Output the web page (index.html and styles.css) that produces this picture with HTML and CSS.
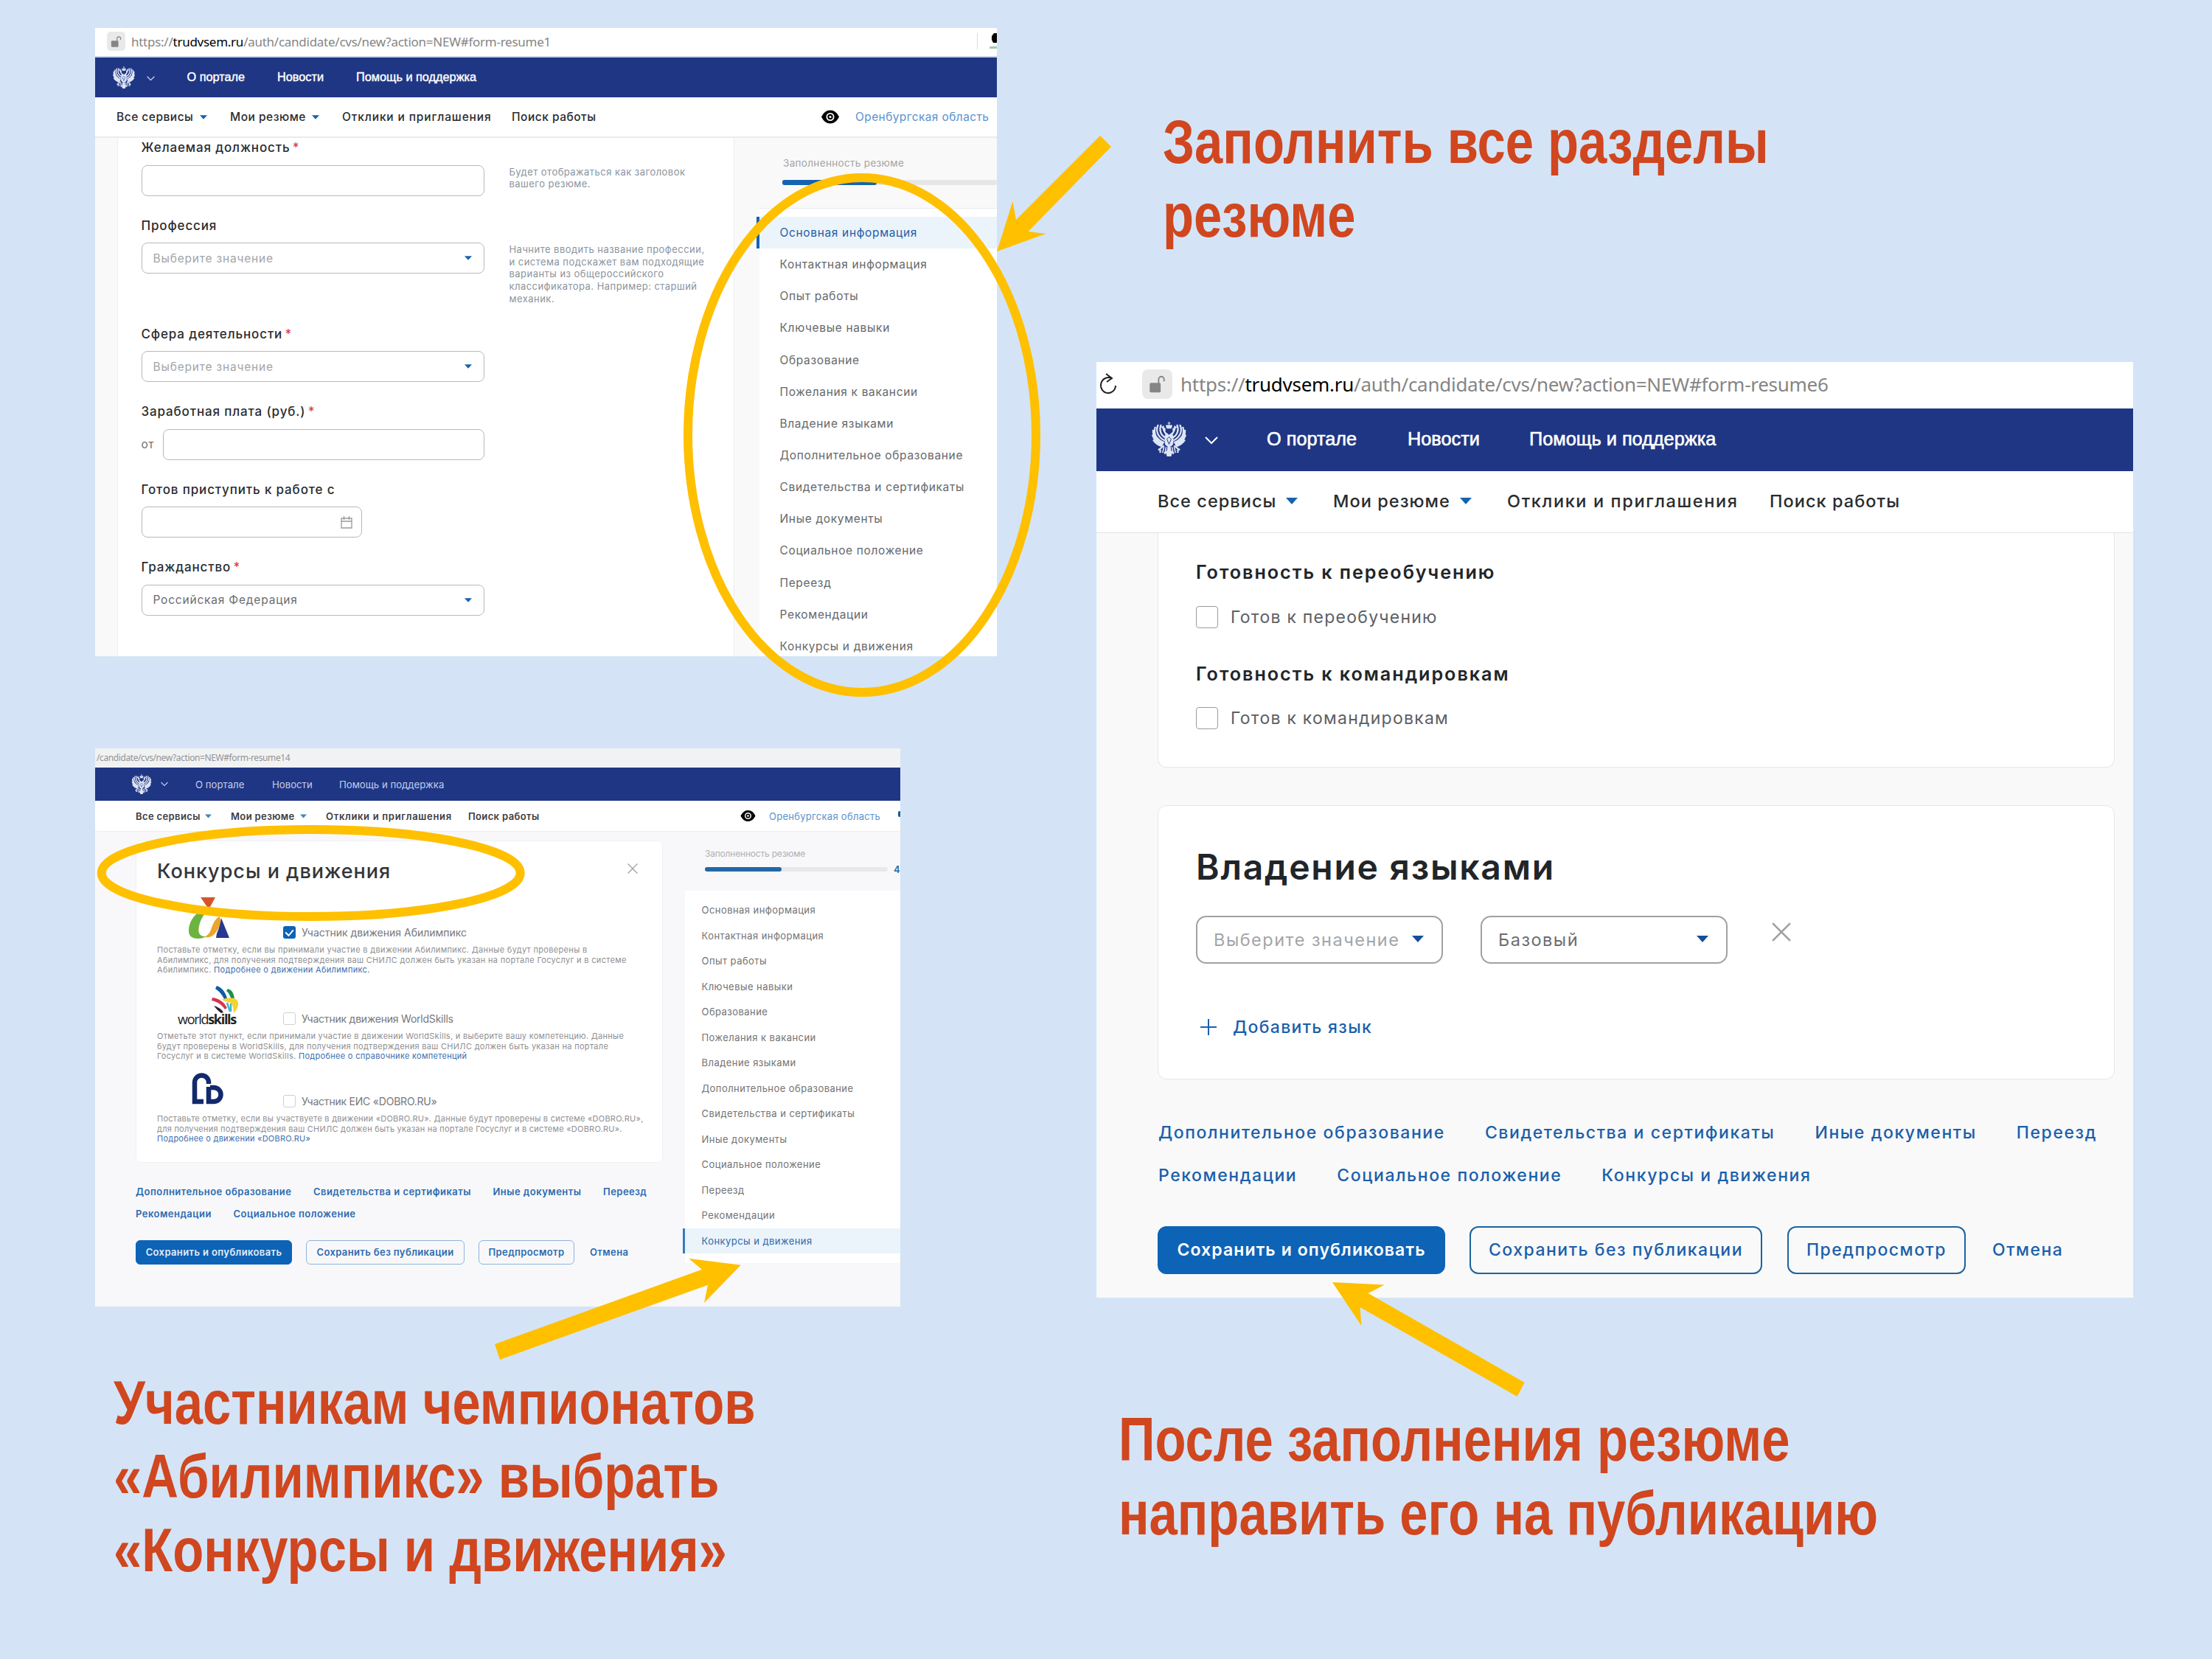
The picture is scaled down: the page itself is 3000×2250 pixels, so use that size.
FILE: index.html
```html
<!DOCTYPE html>
<html lang="ru">
<head>
<meta charset="utf-8">
<title>Заполнение резюме</title>
<link rel="stylesheet" href="styles.css">
</head>
<body>
<svg class="defs" width="0" height="0" aria-hidden="true">
  <symbol id="caret" viewBox="0 0 16 9"><path d="M0 0h16L8 9z"/></symbol>
  <symbol id="chev" viewBox="0 0 18 11"><path d="M1 1l8 8 8-8" fill="none" stroke="currentColor" stroke-width="2"/></symbol>
  <symbol id="cross" viewBox="0 0 24 24"><path d="M1 1l22 22M23 1L1 23" fill="none" stroke="currentColor" stroke-width="2.4"/></symbol>
  <symbol id="lock" viewBox="0 0 24 28"><rect x="1" y="12" width="16" height="14" rx="2"/><path d="M14 13V7a4 4 0 0 1 8 0v3" fill="none" stroke="currentColor" stroke-width="2"/></symbol>
  <symbol id="eye" viewBox="0 0 24 18"><path d="M0 9C3 3 7 0 12 0s9 3 12 9c-3 6-7 9-12 9S3 15 0 9z"/><circle cx="12" cy="9" r="4.600" fill="none" stroke="#fff" stroke-width="1.800"/><circle cx="12" cy="9" r="1.600" fill="#fff"/></symbol>
  <symbol id="eagle" viewBox="0 0 50 48">
    <path d="M25 0v5M23 2h4M21 5h8l-1 4h-6z" stroke="currentColor" stroke-width="1"/>
    <path d="M15 7l5 2 0 5 5 4 0 0 5-4 0-5 5-2-2 6-3 5-1 9h-8l-1-9-3-5z"/>
    <path d="M13 8l5-3v4zM37 8l-5-3v4z"/>
    <g fill="none" stroke="currentColor" stroke-width="2.300">
      <path d="M14 4c-3 7-1 14 6 18M10 4c-4 8-1 17 9 22M6 7c-3 9 1 17 12 22M3 11c-1 9 4 15 14 20M2 18c2 7 6 11 14 15M3 25c3 5 6 7 12 9"/>
      <path d="M36 4c3 7 1 14-6 18M40 4c4 8 1 17-9 22M44 7c3 9-1 17-12 22M47 11c1 9-4 15-14 20M48 18c-2 7-6 11-14 15M47 25c-3 5-6 7-12 9"/>
      <path d="M18 33l-6 5 1 5M32 33l6 5-1 5M10 38l4 2M40 38l-4 2"/>
    </g>
    <path d="M19 19h12v10q0 4-6 6-6-2-6-6z"/>
    <path d="M23 34h4l1 6 5 3-4 1-1 4h-6l-1-4-4-1 5-3z"/>
    <path d="M18 35l-2 8M21 35l-2 10M32 35l2 8M29 35l2 10" stroke="currentColor" stroke-width="1.600"/>
    <path d="M25 21l3 3-3 7-3-7z" fill="none" stroke="#1f3684" stroke-width="1"/>
  </symbol>
</svg>

<main class="slide">

  <section class="win w1">
    <div class="urlbar">
      <span class="lockbox"><svg><use href="#lock"/></svg></span>
      <span class="url">https://<b>trudvsem.ru</b>/auth/candidate/cvs/new?action=NEW#form-resume1</span>
      <span class="ext"><svg viewBox="0 0 10 22"><path d="M10 0H6L3 4v5l2 4h5z" fill="#000"/><path d="M0 18h10v3H0z" fill="#9cd0a6"/></svg></span>
    </div>
    <header class="top">
      <svg class="eagle"><use href="#eagle"/></svg><svg class="chev"><use href="#chev"/></svg>
      <a>О портале</a><a>Новости</a><a>Помощь и поддержка</a>
    </header>
    <nav class="menu">
      <a>Все сервисы</a><svg class="caret"><use href="#caret"/></svg>
      <a>Мои резюме</a><svg class="caret"><use href="#caret"/></svg>
      <a class="wide">Отклики и приглашения</a><a>Поиск работы</a>
      <svg class="eye"><use href="#eye"/></svg><a class="region">Оренбургская область</a>
    </nav>
    <div class="body">
      <form class="form">
        <label>Желаемая должность <em>*</em></label>
        <div class="row"><div class="field"></div><p>Будет отображаться как заголовок<br>вашего резюме.</p></div>
        <label>Профессия</label>
        <div class="row tall"><div class="field"><span>Выберите значение</span><svg class="caret"><use href="#caret"/></svg></div><p>Начните вводить название профессии,<br>и система подскажет вам подходящие<br>варианты из общероссийского<br>классификатора. Например: старший<br>механик.</p></div>
        <label>Сфера деятельности <em>*</em></label>
        <div class="row"><div class="field"><span>Выберите значение</span><svg class="caret"><use href="#caret"/></svg></div></div>
        <label>Заработная плата (руб.) <em>*</em></label>
        <div class="row"><span class="from">от</span><div class="field salary"></div></div>
        <label>Готов приступить к работе с</label>
        <div class="row"><div class="field date"><svg class="cal" viewBox="0 0 16 17"><path d="M1 3h14v13H1zM1 7h14M4.500 0v5M11.500 0v5" fill="none" stroke="#9a9a9a" stroke-width="1.300"/></svg></div></div>
        <label>Гражданство <em>*</em></label>
        <div class="row"><div class="field filled"><span>Российская Федерация</span><svg class="caret"><use href="#caret"/></svg></div></div>
      </form>
      <aside class="side">
        <div class="done">Заполненность резюме</div>
        <div class="bar"><i></i></div>
        <ul>
          <li class="on">Основная информация</li><li>Контактная информация</li><li>Опыт работы</li><li>Ключевые навыки</li><li>Образование</li><li>Пожелания к вакансии</li><li>Владение языками</li><li>Дополнительное образование</li><li>Свидетельства и сертификаты</li><li>Иные документы</li><li>Социальное положение</li><li>Переезд</li><li>Рекомендации</li><li>Конкурсы и движения</li>
        </ul>
      </aside>
    </div>
  </section>

  <section class="win w2">
    <div class="urlbar">
      <svg class="reload" viewBox="0 0 24 30"><path d="M17 7.500A10 10.500 0 1 0 22 17M9 1l8 6-7 5" fill="none" stroke="#222" stroke-width="2"/></svg>
      <span class="lockbox"><svg><use href="#lock"/></svg></span>
      <span class="url">https://<b>trudvsem.ru</b>/auth/candidate/cvs/new?action=NEW#form-resume6</span>
    </div>
    <header class="top">
      <svg class="eagle"><use href="#eagle"/></svg><svg class="chev"><use href="#chev"/></svg>
      <a>О портале</a><a>Новости</a><a>Помощь и поддержка</a>
    </header>
    <nav class="menu">
      <a>Все сервисы</a><svg class="caret"><use href="#caret"/></svg>
      <a>Мои резюме</a><svg class="caret"><use href="#caret"/></svg>
      <a class="wide">Отклики и приглашения</a><a>Поиск работы</a>
    </nav>
    <div class="body">
      <div class="card ready">
        <h3>Готовность к переобучению</h3>
        <div class="check"><i></i><span>Готов к переобучению</span></div>
        <h3>Готовность к командировкам</h3>
        <div class="check"><i></i><span>Готов к командировкам</span></div>
      </div>
      <div class="card langs">
        <h2>Владение языками</h2>
        <div class="pick">
          <div class="field"><span>Выберите значение</span><svg class="caret"><use href="#caret"/></svg></div>
          <div class="field filled"><span>Базовый</span><svg class="caret"><use href="#caret"/></svg></div>
          <svg class="cross"><use href="#cross"/></svg>
        </div>
        <div class="add"><svg viewBox="0 0 22 22"><path d="M11 0v22M0 11h22" stroke="#1a62ae" stroke-width="2"/></svg>Добавить язык</div>
      </div>
      <div class="links">
        <div><a>Дополнительное образование</a><a>Свидетельства и сертификаты</a><a>Иные документы</a><a>Переезд</a></div>
        <div><a>Рекомендации</a><a>Социальное положение</a><a>Конкурсы и движения</a></div>
      </div>
      <div class="buttons"><a class="btn main">Сохранить и опубликовать</a><a class="btn">Сохранить без публикации</a><a class="btn">Предпросмотр</a><a class="cancel">Отмена</a></div>
    </div>
  </section>

  <section class="win w3">
    <div class="urlbar"><span class="url">/candidate/cvs/new?action=NEW#form-resume14</span></div>
    <header class="top">
      <svg class="eagle"><use href="#eagle"/></svg><svg class="chev"><use href="#chev"/></svg>
      <a>О портале</a><a>Новости</a><a>Помощь и поддержка</a>
    </header>
    <nav class="menu">
      <a>Все сервисы</a><svg class="caret"><use href="#caret"/></svg>
      <a>Мои резюме</a><svg class="caret"><use href="#caret"/></svg>
      <a class="wide">Отклики и приглашения</a><a>Поиск работы</a>
      <svg class="eye"><use href="#eye"/></svg><a class="region">Оренбургская область</a><i class="pin"></i>
    </nav>
    <div class="body">
      <div class="col">
        <div class="card">
          <div class="title"><h2>Конкурсы и движения</h2><svg class="cross"><use href="#cross"/></svg></div>
          <div class="item abil">
            <svg class="logo" viewBox="0 0 56 56"><path d="M16 0h20l-7 13c3 2 6 4 6 8l-12-1c2-3 3-5 2-7z" fill="#d4552a"/><path d="M19 17C6 23 0 35 0 45c0 8 5 11 12 11 5 0 9-1 11-3-9 0-11-6-9-14 2-9 6-15 10-20z" fill="#6cb33f"/><path d="M42 26c-7 3-9 10-12 18-2 5-5 8-9 10 13 2 17-7 23-20z" fill="#eaa52b"/><path d="M44 28l11 27H37l1-6c3-7 5-13 6-21z" fill="#28378f"/></svg>
            <i class="box on"><svg viewBox="0 0 16 16"><path d="M3 8l4 4 6-7" fill="none" stroke="#fff" stroke-width="1.800"/></svg></i><span>Участник движения Абилимпикс</span>
          </div>
          <p class="p1">Поставьте отметку, если вы принимали участие в движении Абилимпикс. Данные будут проверены в<br>Абилимпикс, для получения подтверждения ваш СНИЛС должен быть указан на портале Госуслуг и в системе<br>Абилимпикс. <a>Подробнее о движении Абилимпикс.</a></p>
          <div class="item ws">
            <div class="logo"><svg viewBox="0 0 38 38"><path d="M7 1c7 2 12 9 14 17l-4 1C14 13 11 9 5 5z" fill="#0f5ba8"/><path d="M22 5c7 2 9 9 9 16l-4 1c-1-6-3-11-7-14z" fill="#15924b"/><path d="M1 17c9 1 16 6 20 14l-3 2C14 27 9 23 0 21z" fill="#d8324a"/><path d="M14 20c10-5 24-3 22 7-1 5-3 8-6 11-1-8-1-12-5-14-4-1-7-2-11-4z" fill="#f3d32f"/><path d="M3 28c6 2 10 4 13 9l-3 1c-3-2-6-5-10-10z" fill="#2a2230"/><path d="M21 24l4 12M26 25v11" stroke="#41b6d8" stroke-width="2.500"/></svg><small>world<b>skills</b></small></div>
            <i class="box"></i><span>Участник движения WorldSkills</span>
          </div>
          <p class="p2">Отметьте этот пункт, если принимали участие в движении WorldSkills, и выберите вашу компетенцию. Данные<br>будут проверены в WorldSkills, для получения подтверждения ваш СНИЛС должен быть указан на портале<br>Госуслуг и в системе WorldSkills. <a>Подробнее о справочнике компетенций</a></p>
          <div class="item dobro">
            <svg class="logo" viewBox="0 0 46 43"><path d="M23 15v-2A9.500 9.500 0 0 0 4 13v26h12M23 19v20h7a9 9 0 0 0 0-19h-5" fill="none" stroke="#12296b" stroke-width="6.500"/></svg>
            <i class="box"></i><span>Участник ЕИС «DOBRO.RU»</span>
          </div>
          <p class="p3">Поставьте отметку, если вы участвуете в движении «DOBRO.RU». Данные будут проверены в системе «DOBRO.RU»,<br>для получения подтверждения ваш СНИЛС должен быть указан на портале Госуслуг и в системе «DOBRO.RU».<br><a>Подробнее о движении «DOBRO.RU»</a></p>
        </div>
        <div class="links">
          <div><a>Дополнительное образование</a><a>Свидетельства и сертификаты</a><a>Иные документы</a><a>Переезд</a></div>
          <div><a>Рекомендации</a><a>Социальное положение</a></div>
        </div>
        <div class="buttons"><a class="btn main">Сохранить и опубликовать</a><a class="btn">Сохранить без публикации</a><a class="btn">Предпросмотр</a><a class="cancel">Отмена</a></div>
      </div>
      <aside class="side">
        <div class="done">Заполненность резюме</div>
        <div class="meter"><div class="bar"><i></i></div><b>4</b></div>
        <ul>
          <li>Основная информация</li><li>Контактная информация</li><li>Опыт работы</li><li>Ключевые навыки</li><li>Образование</li><li>Пожелания к вакансии</li><li>Владение языками</li><li>Дополнительное образование</li><li>Свидетельства и сертификаты</li><li>Иные документы</li><li>Социальное положение</li><li>Переезд</li><li>Рекомендации</li><li class="on">Конкурсы и движения</li>
        </ul>
      </aside>
    </div>
  </section>

  <h1 class="note n1"><span>Заполнить все разделы</span><br><span>резюме</span></h1>
  <h1 class="note n2"><span>После заполнения резюме</span><br><span>направить его на публикацию</span></h1>
  <h1 class="note n3"><span>Участникам чемпионатов</span><br><span>«Абилимпикс» выбрать</span><br><span>«Конкурсы и движения»</span></h1>

  <svg class="marks" viewBox="0 0 3000 2250">
    <g fill="none" stroke="#ffc000" stroke-width="12">
      <ellipse cx="1169" cy="590" rx="236" ry="349"/>
      <ellipse cx="421.700" cy="1184" rx="284" ry="59"/>
    </g>
    <g fill="#ffc000">
      <path d="M1492 184L1507 199 1394.500 314 1418.500 317 1352 341 1373.500 273 1378 298z"/>
      <path d="M1807 1739L1877.600 1742.400 1855.600 1754 2067.700 1875 2057.600 1894 1844.600 1773 1846.400 1798z"/>
      <path d="M1004.700 1715.700L955 1767 960 1742.700 678 1844 671 1823 952 1721.700 934 1706.700z"/>
    </g>
  </svg>
</main>
</body>
</html>
```
FILE: styles.css
```css
* { box-sizing: border-box; margin: 0; padding: 0; }
body { width: 3000px; height: 2250px; overflow: hidden; font-family: Inter, "Noto Sans", sans-serif; }
.defs { position: absolute; }
.slide { position: relative; width: 3000px; height: 2250px; background: #d4e4f6; overflow: hidden; white-space: nowrap; }
.marks { position: absolute; left: 0; top: 0; width: 3000px; height: 2250px; }
svg { display: block; }
i { font-style: normal; }

/* captions */
.note { position: absolute; font: bold 84px/100px "Liberation Sans", Arial, sans-serif; color: #d0461f; }
.note span { display: inline-block; transform: scaleX(.819); transform-origin: 0 50%; }
.n1 { left: 1577px; top: 142px; }
.n2 { left: 1517px; top: 1902px; }
.n3 { left: 154px; top: 1852px; }

/* shared window parts */
.win { position: absolute; overflow: hidden; background: #fff; display: flex; flex-direction: column; }
.urlbar, .top, .menu { display: flex; align-items: center; flex: none; }
.url { font-family: "Noto Sans", sans-serif; color: #858585; }
.url b { font-weight: 400; color: #000; }
.lockbox { background: #e9e9e9; color: #858585; fill: currentColor; display: flex; align-items: center; justify-content: center; flex: none; }
.top { display: grid; background: #1f3684; color: #fff; fill: #dfe5f5; }
.eagle { color: #dfe5f5; }
.menu { display: grid; color: #2a2c2f; font-weight: 500; }
.caret { fill: #1463ae; }
.body { flex: 1; background: #f9f9f9; }
.field { border: 1.5px solid #b9b9b9; background: #fff; display: flex; align-items: center; justify-content: space-between; color: #a3a5a9; flex: none; }
.field.filled { color: #6a6d72; }
.side ul { list-style: none; background: #fff; }
.side li { color: #66696c; }
.side li.on { background: #ebf4fb; color: #1f5fa8; }
.menu .region { color: #5a93cc; font-weight: 400; }
.links, .buttons a { color: #1a5fab; font-weight: 500; }
.links div { display: flex; }
.buttons { display: flex; }
.btn { display: flex; align-items: center; justify-content: center; border: 1.5px solid #1c639f; flex: none; }
.buttons .main { background: #0d63b6; color: #fff; border-color: #0d63b6; }

/* first window */
.w1 { left: 129px; top: 38px; width: 1223px; height: 852px; }
.w1 .urlbar { height: 40px; border-bottom: 2px solid #c7d3e3; }
.w1 .lockbox { width: 25px; height: 26px; border-radius: 5px; margin: -2px 0 0 16px; }
.w1 .lockbox svg { width: 15px; height: 17px; }
.w1 .url { font-size: 17px; letter-spacing: -.26px; margin: -2px 0 0 8px; }
.ext { margin: -2px 0 0 auto; width: 27px; border-left: 1px solid #ddd; padding-left: 16px; }
.ext svg { width: 10px; height: 22px; }
.w1 .top { height: 54px; grid-template-columns: 47px 54.5px 122.5px 107px 1fr; padding: 0 0 1px 23px; font: 16.3px "Liberation Sans"; -webkit-text-stroke: .4px #fff; }
.w1 .eagle { width: 32px; height: 30px; }
.w1 .chev { width: 11px; height: 7px; margin-top: 4px; color: #cdd6ee; }
.w1 .menu { height: 55px; border-bottom: 2px solid #ebebeb; grid-template-columns: 113px 41px 111px 41px 230px 420px 46px 1fr; padding-left: 29px; font-size: 15.5px; letter-spacing: .5px; }
.w1 .menu .wide { letter-spacing: .87px; }
.w1 .menu .region { letter-spacing: .4px; }
.w1 .caret { width: 10px; height: 6px; }
.w1 .eye { width: 24px; height: 19px; }
.w1 .body { display: grid; grid-template-columns: 867px 34px 1fr; }
.form { margin-left: 30px; background: #fff; border-left: 1px solid #f0f0f0; border-right: 1px solid #ececec; padding: 1px 0 0 31.5px; }
.form label { display: block; height: 24px; line-height: 24px; margin-bottom: 11.5px; font-size: 17px; letter-spacing: .85px; font-weight: 500; color: #2a2c2f; }
.form em { color: #e0404c; font-style: normal; margin-left: -2px; }
.row { display: flex; height: 42px; margin-bottom: 28px; }
.row.tall { margin-bottom: 69.5px; }
.row .field { width: 465px; height: 42px; border-radius: 8px; padding: 0 16px 0 15px; font-size: 15.5px; letter-spacing: .8px; }
.row .salary { width: 436px; }
.row .date { width: 299px; justify-content: flex-end; padding-right: 12px; }
.cal { width: 16px; height: 17px; }
.from { width: 29px; line-height: 42px; font-size: 15.5px; letter-spacing: .5px; color: #6f7276; }
.row p { margin: 1px 0 0 34px; font-size: 13px; letter-spacing: .46px; line-height: 16.7px; color: #8a949e; }
.w1 .side { grid-column: 3; }
.w1 .done { margin: 24px 0 13px 32px; font-size: 13.5px; letter-spacing: .33px; line-height: 20px; color: #a3a3a3; }
.w1 .bar { margin-left: 31px; height: 7px; background: #e6e6e6; border-radius: 3px; }
.bar i { display: block; height: 100%; background: #1463b2; border-radius: inherit; }
.w1 .bar i { width: 128px; }
.w1 ul { margin-top: 31px; border-top: 1px solid #ececec; padding-top: 11px; height: 620px; }
.w1 li { height: 43.15px; line-height: 43.15px; padding-left: 27.5px; font-size: 15.5px; letter-spacing: .65px; }
.w1 li.on { box-shadow: -4px 0 0 #1463b2; }

/* second window */
.w2 { left: 1487px; top: 491px; width: 1406px; height: 1269px; }
.w2 .urlbar { height: 63px; padding-bottom: 3px; }
.reload { width: 24px; height: 30px; margin-left: 4px; flex: none; }
.w2 .lockbox { width: 41px; height: 40px; border-radius: 8px; margin: 0 11px 0 34px; }
.w2 .lockbox svg { width: 23px; height: 26px; }
.w2 .url { font-size: 26px; letter-spacing: -.27px; }
.w2 .top { height: 85px; grid-template-columns: 73px 84px 191px 165px 1fr; padding: 0 0 2px 74px; font: 25.3px "Liberation Sans"; -webkit-text-stroke: .6px #fff; }
.w2 .eagle { width: 49px; height: 47px; }
.w2 .chev { width: 18px; height: 11px; margin-top: 4px; }
.w2 .menu { height: 84px; border-bottom: 1.5px solid #e3e3e3; grid-template-columns: 174px 64px 172px 64px 356px 1fr; padding: 0 0 2px 83px; font-size: 23.5px; letter-spacing: 1.05px; }
.w2 .menu .wide { letter-spacing: 1.62px; }
.w2 .caret { width: 16px; height: 9px; }
.w2 .body { padding-left: 83px; }
.w2 .card { width: 1298px; background: #fff; border: 1.5px solid #e6e7e8; border-radius: 12px; padding-left: 51px; }
.w2 .ready { height: 318px; border-top: 0; border-radius: 0 0 12px 12px; padding-top: 38px; }
.ready h3 { font-size: 25.2px; letter-spacing: 1.95px; font-weight: 600; line-height: 30px; color: #212529; margin-bottom: 31px; }
.ready h3 + .check + h3 { margin-top: 47px; margin-bottom: 30px; }
.check { display: flex; align-items: center; height: 30px; font-size: 23px; letter-spacing: 1.25px; color: #5c6065; }
.check i { width: 30px; height: 30px; border: 1.5px solid #9b9b9b; border-radius: 4px; margin-right: 17px; }
.langs { margin-top: 51px; height: 372px; padding-top: 53px; }
.langs h2 { font-size: 48px; letter-spacing: 1.75px; font-weight: 600; line-height: 60px; color: #212529; }
.pick { display: flex; align-items: flex-start; margin-top: 36px; }
.pick .field { width: 335px; height: 65px; border: 2px solid #a1a1a1; border-radius: 14px; padding: 0 24px 0 22px; margin-right: 51px; font-size: 23.5px; letter-spacing: 1.5px; }
.pick .field .caret { fill: #154f98; margin-bottom: 3px; }
.pick .cross { width: 26px; height: 26px; margin: 9px 0 0 9px; color: #a0a0a0; }
.add { display: flex; align-items: center; height: 30px; margin-top: 71px; padding-left: 6px; font-size: 23px; letter-spacing: 1.3px; font-weight: 500; color: #1a5fab; }
.add svg { width: 22px; height: 22px; margin-right: 22px; }
.w2 .links { margin-top: 56.5px; font-size: 23px; letter-spacing: 1.58px; line-height: 30px; padding-left: 1px; }
.w2 .links div { gap: 54px; margin-bottom: 28px; }
.w2 .buttons { margin-top: 54.5px; font-size: 23px; letter-spacing: 1.5px; line-height: 65px; }
.w2 .btn { height: 65px; border-radius: 12px; border-width: 2px; }
.w2 .btn:nth-child(1) { width: 390px; margin-right: 33px; font-weight: 600; letter-spacing: 1.1px; }
.w2 .btn:nth-child(2) { width: 397px; margin-right: 34px; }
.w2 .btn:nth-child(3) { width: 242px; margin-right: 36px; }

/* third window */
.w3 { left: 129px; top: 1015px; width: 1092px; height: 757px; }
.w3 .urlbar { height: 26px; padding-bottom: 2px; background: #f1f2f4; }
.w3 .url { font-size: 12px; letter-spacing: -.4px; margin-left: 2px; color: #939393; }
.w3 .top { height: 45px; grid-template-columns: 40px 47px 104px 91px 1fr; padding-left: 49px; font-size: 13.2px; color: #c3cdeb; }
.w3 .eagle { width: 28px; height: 27px; }
.w3 .chev { width: 10px; height: 7px; }
.w3 .menu { height: 42px; border-bottom: 1px solid #efeff1; grid-template-columns: 94px 35px 94px 35px 193px 369px 39px 175px 1fr; padding-left: 55px; font-size: 13px; letter-spacing: .37px; font-weight: 600; color: #3c3c3f; }
.w3 .menu .wide { letter-spacing: .68px; }
.w3 .menu .region { letter-spacing: .28px; }
.w3 .caret { width: 9px; height: 6px; fill: #4287b8; }
.w3 .eye { width: 21px; height: 15px; }
.pin { width: 4px; height: 8px; background: #1b5b96; border-radius: 2px 0 0 2px; margin-top: -6px; }
.w3 .body { display: grid; grid-template-columns: 55px 715px 30px 1fr; background: #f8f8fa; }
.w3 .col { grid-column: 2; padding-top: 12px; }
.w3 .card { height: 437px; background: #fff; border: 1px solid #f2f2f4; border-radius: 7px; padding: 22px 0 0 28px; }
.title { display: flex; justify-content: space-between; align-items: center; height: 36px; }
.title h2 { font-size: 27px; letter-spacing: 1px; font-weight: 500; color: #333538; }
.title .cross { width: 14px; height: 14px; margin: -6px 33px 0 0; color: #a6a6a6; }
.item { display: grid; grid-template-columns: 171px 25px 1fr; align-items: end; font-size: 14px; line-height: 17px; color: #77787a; }
.box { width: 17px; height: 17px; border: 1px solid #cfcfcf; border-radius: 3px; }
.box.on { background: #0d62b5; border: 0; }
.abil { height: 57px; margin-top: 17px; }
.abil .logo { width: 56px; height: 56px; margin-left: 43px; }
.ws { height: 54px; margin-top: 14px; }
.ws, .dobro { letter-spacing: -.22px; }
.ws .logo { margin-left: 28px; }
.ws .logo svg { width: 38px; height: 38px; margin-left: 46px; }
.ws small { display: block; font: 18px/16px "Open Sans", sans-serif; letter-spacing: -1.3px; color: #222; }
.dobro { height: 47px; margin-top: 16px; }
.dobro .logo { width: 46px; height: 43px; margin: 0 0 4px 47px; }
.w3 p { padding-top: 1px; margin-top: 8px; font-size: 11px; letter-spacing: .3px; line-height: 13.6px; color: #8f9093; height: 41px; }
.w3 .p1 { letter-spacing: .33px; }
.w3 .p3 { letter-spacing: .24px; }
.w3 p a { color: #3d6fae; }
.w3 .links { margin-top: 29px; font-size: 13px; letter-spacing: .48px; line-height: 20px; }
.w3 .links div { gap: 29.5px; margin-bottom: 9.5px; }
.w3 .links, .w3 .buttons a { font-weight: 600; color: #2b6bb0; }
.w3 .buttons { margin-top: 26.5px; font-size: 13px; letter-spacing: .38px; line-height: 33px; }
.w3 .btn { height: 33px; border-radius: 6px; border: 1.5px solid #8fb3d9; }
.w3 .buttons .main { color: #e4edf8; border-color: #0d63b6; }
.w3 .btn:nth-child(1) { width: 212px; margin-right: 19px; }
.w3 .btn:nth-child(2) { width: 215px; margin-right: 19px; }
.w3 .btn:nth-child(3) { width: 130px; margin-right: 21px; }
.w3 .side { grid-column: 4; }
.w3 .done { margin: 19.5px 0 8.5px 27px; font-size: 12px; letter-spacing: -.2px; line-height: 20px; color: #b0b0b3; }
.meter { display: flex; align-items: center; height: 6px; padding-left: 27px; }
.meter .bar { width: 248px; height: 6px; border-radius: 3px; background: #e8e8ea; flex: none; }
.meter .bar i { width: 104px; background: #2268a6; }
.meter b { margin-left: 8px; font-size: 13px; font-weight: 600; color: #2b6bb0; }
.w3 ul { margin-top: 26px; height: 505px; padding-top: 9px; }
.w3 li { height: 34.5px; line-height: 34.5px; padding-left: 22.5px; font-size: 13px; letter-spacing: .45px; color: #727375; }
.w3 li.on { box-shadow: -3px 0 0 #3a7abd; color: #2f69ab; }
```
